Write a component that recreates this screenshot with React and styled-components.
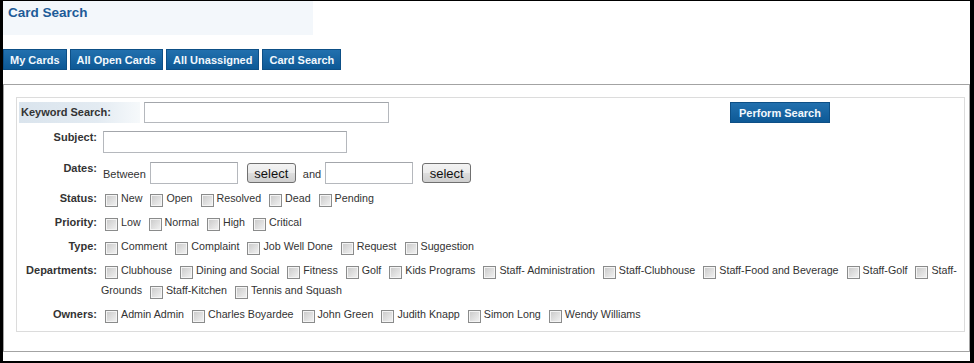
import React from 'react'
import styled, { createGlobalStyle } from 'styled-components'

const statuses = ['New', 'Open', 'Resolved', 'Dead', 'Pending']
const priorities = ['Low', 'Normal', 'High', 'Critical']
const types = ['Comment', 'Complaint', 'Job Well Done', 'Request', 'Suggestion']
const departments = [
  'Clubhouse',
  'Dining and Social',
  'Fitness',
  'Golf',
  'Kids Programs',
  'Staff- Administration',
  'Staff-Clubhouse',
  'Staff-Food and Beverage',
  'Staff-Golf',
  'Staff-Grounds',
  'Staff-Kitchen',
  'Tennis and Squash',
]
const owners = ['Admin Admin', 'Charles Boyardee', 'John Green', 'Judith Knapp', 'Simon Long', 'Wendy Williams']
const tabs = ['My Cards', 'All Open Cards', 'All Unassigned', 'Card Search']

// keep the box glued to the first word (or "Staff-" part) so lines only break where the text allows
const splitLead = (text) => {
  const m = text.match(/^(\S*?-|\S+)(.*)$/)
  return m ? [m[1], m[2]] : [text, '']
}

const CheckGroup = ({ label, options }) => (
  <FieldRow $gap={0}>
    <Label $line={20} $top={2}>{label}</Label>
    <Checks>
      {options.map((opt) => {
        const [lead, rest] = splitLead(opt)
        return (
          <React.Fragment key={opt}>
            <Option>
              <Lead>
                <Box type="checkbox" />
                {lead}
              </Lead>
              {rest && <wbr />}
              {rest}
            </Option>{' '}
          </React.Fragment>
        )
      })}
    </Checks>
  </FieldRow>
)

export default function App() {
  return (
    <Frame>
      <GlobalStyle />
      <Header>
        <Title>Card Search</Title>
      </Header>
      <TabBar>
        {tabs.map((t) => (
          <Tab key={t}>{t}</Tab>
        ))}
      </TabBar>
      <Panel>
        <Form>
          <KeywordRow>
            <KeywordLabel>Keyword Search:</KeywordLabel>
            <TextInput $width={245} $height={21} $ml={4} />
            <PerformButton>Perform Search</PerformButton>
          </KeywordRow>

          <FieldRow $gap={8}>
            <Label $line={13}>Subject:</Label>
            <Value>
              <TextInput $width={244} $height={22} $ml={2} />
            </Value>
          </FieldRow>

          <FieldRow $gap={9}>
            <Label $line={13}>Dates:</Label>
            <DateValue>
              <span>Between</span>
              <TextInput $width={88} $height={22} $ml={4} />
              <SelectButton>select</SelectButton>
              <span>and</span>
              <TextInput $width={88} $height={22} $ml={4} />
              <SelectButton>select</SelectButton>
            </DateValue>
          </FieldRow>

          <Spacer />
          <CheckGroup label="Status:" options={statuses} />
          <CheckGroup label="Priority:" options={priorities} />
          <CheckGroup label="Type:" options={types} />
          <CheckGroup label="Departments:" options={departments} />
          <CheckGroup label="Owners:" options={owners} />
        </Form>
      </Panel>
    </Frame>
  )
}

const GlobalStyle = createGlobalStyle`
  html, body {
    margin: 0;
    padding: 0;
    background: #fff;
  }
  body {
    font-family: "Liberation Sans", Arial, sans-serif;
  }
`

const Frame = styled.div`
  width: 974px;
  height: 363px;
  box-sizing: border-box;
  border-style: solid;
  border-color: #000;
  border-width: 1px 4px 2px 3px;
  background: #fff;
  display: flex;
  flex-direction: column;
`

const Header = styled.div`
  width: 310px;
  height: 34px;
  box-sizing: border-box;
  padding: 4px 5px;
  background: #f3f7fb;
`

const Title = styled.h1`
  margin: 0;
  font: bold 13.5px/16px "Liberation Sans", Arial, sans-serif;
  color: #1d5b98;
`

const TabBar = styled.nav`
  display: flex;
  gap: 3px;
  margin-top: 14px;
`

const blueButton = `
  height: 21px;
  box-sizing: border-box;
  border: 1px solid #0d4f86;
  background: linear-gradient(#2270ae, #0d5996);
  color: #f2f8fd;
  font: bold 11px "Liberation Sans", Arial, sans-serif;
  cursor: pointer;
`

const Tab = styled.button`
  ${blueButton}
  padding: 0 6px;
`

const Panel = styled.section`
  margin-top: 14px;
  border: 1px solid #a3a3a3;
  padding: 12px 4px 19px 12px;
`

const Form = styled.div`
  border: 1px solid #dcdcdc;
  padding: 4px 0 5px 2px;
  color: #333;
  font-size: 11px;
`

const KeywordRow = styled.div`
  display: flex;
  align-items: stretch;
  height: 21px;
`

const KeywordLabel = styled.div`
  width: 121px;
  box-sizing: border-box;
  padding-left: 2px;
  font-weight: bold;
  line-height: 21px;
  background: linear-gradient(to right, #dae4ed 0%, #e3ebf2 65%, #f6f9fb 100%);
`

const TextInput = styled.input`
  width: ${(p) => p.$width}px;
  height: ${(p) => p.$height}px;
  margin: 0 0 0 ${(p) => p.$ml}px;
  box-sizing: border-box;
  border: 1px solid #b5b8bd;
  border-top-color: #a3a6ab;
  padding: 0 3px;
  background: #fff;
  font: 12px "Liberation Sans", Arial, sans-serif;
`

const PerformButton = styled.button`
  ${blueButton}
  margin-left: 341px;
  padding: 0 8px;
`

const FieldRow = styled.div`
  display: flex;
  margin-top: ${(p) => p.$gap}px;
`

const Label = styled.div`
  width: 78px;
  flex-shrink: 0;
  text-align: right;
  font-weight: bold;
  line-height: ${(p) => p.$line}px;
  padding-top: ${(p) => p.$top || 0}px;
  margin-right: 4px;
`

const Value = styled.div`
  flex: 1;
  display: flex;
`

const DateValue = styled.div`
  flex: 1;
  display: flex;
  align-items: center;
  align-self: flex-start;
  height: 22px;
  box-sizing: border-box;
  padding: 2px 0 0 2px;
  line-height: 13px;

  & > input {
    margin-top: -2px;
  }
`

const SelectButton = styled.button`
  height: 20px;
  width: 49px;
  margin: -2px 7px 0 9px;
  padding: 0;
  box-sizing: border-box;
  border: 1px solid #707070;
  border-radius: 3px;
  background: linear-gradient(#f3f3f3 0%, #ebebeb 48%, #dddddd 52%, #cfcfcf 100%);
  color: #111;
  font: 13px "Liberation Sans", Arial, sans-serif;
  cursor: pointer;
`

const Spacer = styled.div`
  height: 2px;
`

const Checks = styled.div`
  flex: 1;
  margin-right: -3px;
  font-size: 10.7px;
  line-height: 20px;
  padding: 2px 0;
`

const Option = styled.label`
  margin-right: 1px;
`

const Lead = styled.span`
  white-space: nowrap;
`

const Box = styled.input`
  appearance: none;
  width: 13px;
  height: 13px;
  margin: 0 3px 0 4px;
  box-sizing: border-box;
  vertical-align: -5px;
  border: 1px solid #8a8b8b;
  background: linear-gradient(135deg, #c8c8c8, #f3f3f3);
  box-shadow: inset 0 0 0 1px #f4f4f4;
`
